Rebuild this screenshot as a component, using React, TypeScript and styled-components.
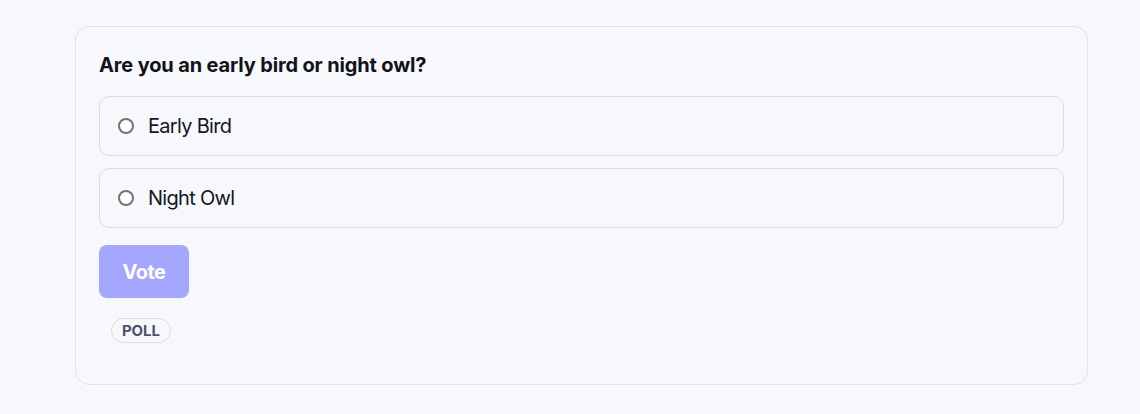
import React from 'react';
import styled, {createGlobalStyle} from 'styled-components';

const GlobalStyle = createGlobalStyle`
  html, body {
    margin: 0;
    padding: 0;
    background: #f7f8fc;
    font-family: Inter, "Noto Sans", sans-serif;
  }
`;

const Page = styled.div`
  padding: 26px 52px 0 75px;
`;

const Card = styled.div`
  box-sizing: border-box;
  width: 1013px;
  height: 359px;
  border: 1px solid #e2e3ea;
  border-radius: 14px;
  background: #f7f8fc;
  padding: 24px 23px 0 23px;
  display: flex;
  flex-direction: column;
`;

const Title = styled.div`
  font-size: 20px;
  font-weight: 700;
  line-height: 28px;
  color: #111318;
  letter-spacing: -0.15px;
  margin-bottom: 17px;
`;

const Options = styled.div`
  display: flex;
  flex-direction: column;
  gap: 12px;
`;

const Option = styled.label`
  box-sizing: border-box;
  height: 60px;
  display: flex;
  align-items: center;
  gap: 14px;
  padding: 0 18px;
  border: 1px solid #dcdde3;
  border-radius: 10px;
  background: #f7f8fc;
  font-size: 20px;
  color: #15171c;
  letter-spacing: -0.7px;
  cursor: pointer;
`;

const Radio = styled.span`
  box-sizing: border-box;
  width: 16px;
  height: 16px;
  border-radius: 50%;
  border: 2px solid #737373;
  background: #ffffff;
  flex-shrink: 0;
`;

const VoteButton = styled.button`
  margin-top: 17px;
  width: 90px;
  height: 53px;
  border: none;
  border-radius: 8px;
  background: #a4a7fd;
  color: #ffffff;
  font-family: Inter, "Noto Sans", sans-serif;
  font-size: 20px;
  font-weight: 700;
  letter-spacing: -0.5px;
  cursor: pointer;
`;

const Footer = styled.div`
  margin-top: 20px;
  padding-left: 12px;
  display: flex;
`;

const Badge = styled.span`
  box-sizing: border-box;
  height: 25px;
  padding: 0 10px;
  display: inline-flex;
  align-items: center;
  border: 1px solid #dcdde3;
  border-radius: 999px;
  font-size: 15px;
  font-weight: 700;
  color: #4a5270;
  letter-spacing: -0.1px;
`;

const options = ['Early Bird', 'Night Owl'];

export default function App() {
  return (
    <Page>
      <GlobalStyle />
      <Card>
        <Title>Are you an early bird or night owl?</Title>
        <Options>
          {options.map((o) => (
            <Option key={o}>
              <Radio />
              {o}
            </Option>
          ))}
        </Options>
        <div>
          <VoteButton>Vote</VoteButton>
        </div>
        <Footer>
          <Badge>POLL</Badge>
        </Footer>
      </Card>
    </Page>
  );
}
